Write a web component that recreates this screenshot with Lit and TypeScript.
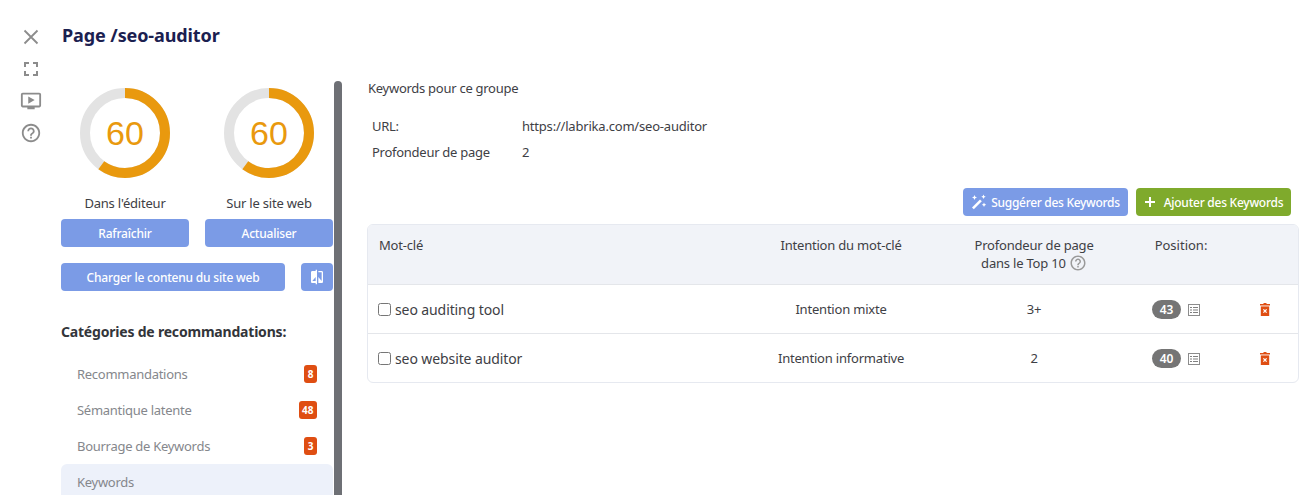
import { LitElement, html, css, svg } from "lit";
import { customElement } from "lit/decorators.js";

const gauge = (v: number) => {
  const r = 40;
  const c = 2 * Math.PI * r;
  return html`<svg class="gauge" width="90" height="90" viewBox="0 0 90 90">
    <circle cx="45" cy="45" r="${r}" fill="none" stroke="#e3e3e3" stroke-width="10"></circle>
    <circle cx="45" cy="45" r="${r}" fill="none" stroke="#e9990e" stroke-width="10"
      stroke-dasharray="${(c * v) / 100} ${c}" transform="rotate(-90 45 45)"></circle>
    <text x="45" y="57" text-anchor="middle" class="gauge-num">${v}</text>
  </svg>`;
};

const helpPath = svg`<path d="M11 18h2v-2h-2v2zm1-16C6.48 2 2 6.48 2 12s4.48 10 10 10 10-4.48 10-10S17.52 2 12 2zm0 18c-4.41 0-8-3.59-8-8s3.59-8 8-8 8 3.59 8 8-3.59 8-8 8zm0-14c-2.21 0-4 1.79-4 4h2c0-1.1.9-2 2-2s2 .9 2 2c0 2-3 1.75-3 5h2c0-2.25 3-2.5 3-5 0-2.21-1.79-4-4-4z"></path>`;

const tableIcon = html`<svg class="tbl" width="14" height="14" viewBox="0 0 14 14">
  <rect x="1.5" y="1.5" width="11" height="11" fill="none" stroke="#8c8c8c" stroke-width="1"></rect>
  <path d="M3 4.500h2M6 4.500h5M3 7h2M6 7h5M3 9.500h2M6 9.500h5" stroke="#808080" stroke-width="1.2" fill="none"></path>
</svg>`;

const trashIcon = html`<svg width="10" height="13" viewBox="0 0 10 13">
  <path d="M3.5 0h3v1H10v1.600H0V1h3.500z" fill="#df4e12"></path>
  <path d="M.8 3.400h8.400V13H.8z" fill="#df4e12"></path>
  <path d="M3.400 6.400l3.200 3.200M6.600 6.400L3.400 9.600" stroke="#fff" stroke-width="1.3" fill="none"></path>
</svg>`;

@customElement("app-root")
export class AppRoot extends LitElement {
  static styles = css`
    :host { display: block; height: 495px; overflow: hidden; background: #fff; }
    * { box-sizing: border-box; }
    .page { display: flex; height: 495px; overflow: hidden; font-family: "Noto Sans", sans-serif; color: #3e4045; font-size: 13px; letter-spacing: -0.27px; }
    .rail { width: 61px; flex: none; display: flex; flex-direction: column; align-items: center; padding-top: 27px; }
    .rail svg { display: block; fill: #8c8c8c; }
    .rail .i1 { height: 20px; }
    .rail .i2 { margin-top: 12px; height: 20px; }
    .rail .i3 { margin-top: 11px; height: 22px; }
    .rail .i4 { margin-top: 10px; height: 22px; }
    .main { flex: 1; min-width: 0; display: flex; flex-direction: column; }
    h1 { margin: 0; height: 81px; padding: 22px 0 0 1px; font-size: 18px; line-height: 26px; font-weight: 700; color: #1b2050; letter-spacing: -0.1px; }
    .cols { display: flex; flex: 1; min-height: 0; }
    .side { width: 272px; flex: none; padding-top: 7px; }
    .bar { width: 8px; flex: none; margin-left: 1px; background: #6e7075; border-radius: 4px 4px 0 0; }
    .gauges { display: grid; grid-template-columns: 128px 128px; column-gap: 16px; justify-items: center; }
    .gcol { display: flex; flex-direction: column; align-items: center; }
    .gauge { display: block; }
    .gauge-num { font-family: "Liberation Sans", sans-serif; font-size: 34px; fill: #e9990e; letter-spacing: 0; }
    .glabel { margin-top: 14px; height: 22px; line-height: 22px; letter-spacing: -0.2px; }
    .btn { display: flex; align-items: center; justify-content: center; height: 28px; border-radius: 4px; background: #7b9be6; color: #fff; font-size: 12px; font-weight: 500; letter-spacing: -0.2px; white-space: nowrap; }
    .row1 { display: grid; grid-template-columns: 128px 128px; column-gap: 16px; margin-top: 5px; }
    .row2 { display: grid; grid-template-columns: 224px 32px; column-gap: 16px; margin-top: 16px; }
    .btn svg { fill: #fff; display: block; }
    h2 { margin: 30px 0 0; height: 22px; line-height: 22px; font-size: 14px; font-weight: 700; color: #33353a; letter-spacing: -0.2px; }
    .cats { margin-top: 13px; }
    .cat { display: flex; align-items: center; justify-content: space-between; height: 36px; padding: 0 16px 0 16px; color: #85878c; border-radius: 6px 6px 0 0; letter-spacing: -0.28px; }
    .cat.on { background: #edf1fa; }
    .badge { display: flex; align-items: center; justify-content: center; height: 18px; padding: 0 3.5px; border-radius: 3px; background: #df4e12; color: #fff; font-size: 10px; font-weight: 700; letter-spacing: 0; }
    .content { flex: 1; min-width: 0; padding: 0 9px 0 25px; }
    .ctitle { height: 14px; margin: 0 0 0 1px; line-height: 14px; }
    .info { display: grid; grid-template-columns: 150px 1fr; margin: 18px 0 0 5px; }
    .info div { height: 26px; line-height: 26px; }
    .info .url { letter-spacing: -0.2px; }
    .actions { display: flex; justify-content: flex-end; gap: 8px; margin: 23px 8px 0 0; }
    .actions .btn { gap: 4px; }
    .sug { width: 165px; letter-spacing: -0.3px; }
    .add { width: 155px; background: #7faa2c; gap: 8px !important; letter-spacing: -0.25px; }
    .tbl-wrap { margin-top: 8px; border: 1px solid #e6e9f0; border-radius: 6px; overflow: hidden; }
    .tr { display: grid; grid-template-columns: 359px 228px 158px 136px 1fr; align-items: center; }
    .tr + .tr { border-top: 1px solid #e4e6ea; }
    .th { height: 59px; background: #f1f3f8; align-items: start; padding-top: 12px; line-height: 17px; text-align: center; letter-spacing: -0.2px; }
    .th > :first-child { text-align: left; padding-left: 11px; }
    .td { height: 49px; text-align: center; letter-spacing: -0.2px; }
    .cell { margin-top: -1px; }
    .kw { display: flex; align-items: center; text-align: left; padding-left: 10px; font-size: 14px; letter-spacing: -0.1px; gap: 4px; margin-top: 1px; }
    .kw input { margin: 0; width: 13px; height: 13px; }
    .pos { display: flex; align-items: center; padding-left: 39px; gap: 6px; margin-top: 1px; }
    .pill { display: flex; align-items: center; justify-content: center; width: 29px; height: 19px; border-radius: 10px; background: #757575; color: #fff; font-size: 12px; font-weight: 600; letter-spacing: 0; }
    .tbl { display: block; }
    .del { padding-left: 11px; display: flex; margin-top: 1px; }
    .q { vertical-align: -4px; fill: #9a9a9a; }
    .poshead { letter-spacing: 0; }
  `;

  render() {
    const rows = [
      ["seo auditing tool", "Intention mixte", "3+", "43"],
      ["seo website auditor", "Intention informative", "2", "40"],
    ];
    return html`<div class="page">
      <div class="rail">
        <svg class="i1" width="20" height="20" viewBox="0 0 20 20"><path d="M3.500 3.500l13 13M16.500 3.500l-13 13" stroke="#8c8c8c" stroke-width="1.8" fill="none"></path></svg>
        <svg class="i2" width="20" height="20" viewBox="0 0 20 20"><path d="M4 8V4h4M12 4h4v4M16 12v4h-4M8 16H4v-4" stroke="#8c8c8c" stroke-width="2" fill="none"></path></svg>
        <svg class="i3" width="22" height="22" viewBox="0 0 24 24"><path d="M21 3H3c-1.110 0-2 .89-2 2v12c0 1.100.89 2 2 2h5v2h8v-2h5c1.100 0 1.990-.9 1.990-2L23 5c0-1.110-.9-2-2-2zm0 14H3V5h18v12zm-5-6l-7 4V7z"></path></svg>
        <svg class="i4" width="22" height="22" viewBox="0 0 24 24">${helpPath}</svg>
      </div>
      <div class="main">
        <h1>Page /seo-auditor</h1>
        <div class="cols">
          <div class="side">
            <div class="gauges">
              <div class="gcol">${gauge(60)}<div class="glabel">Dans l'éditeur</div></div>
              <div class="gcol">${gauge(60)}<div class="glabel">Sur le site web</div></div>
            </div>
            <div class="row1"><div class="btn">Rafraîchir</div><div class="btn">Actualiser</div></div>
            <div class="row2">
              <div class="btn">Charger le contenu du site web</div>
              <div class="btn"><svg width="16" height="16" viewBox="0 0 24 24"><path d="M10 3H5c-1.100 0-2 .9-2 2v14c0 1.100.9 2 2 2h5v2h2V1h-2v2zm0 15H5l5-6v6zm9-15h-5v2h5v13l-5-6v9h5c1.100 0 2-.9 2-2V5c0-1.100-.9-2-2-2z"></path></svg></div>
            </div>
            <h2>Catégories de recommandations:</h2>
            <div class="cats">
              <div class="cat"><span>Recommandations</span><span class="badge">8</span></div>
              <div class="cat"><span>Sémantique latente</span><span class="badge">48</span></div>
              <div class="cat"><span>Bourrage de Keywords</span><span class="badge">3</span></div>
              <div class="cat on"><span>Keywords</span></div>
            </div>
          </div>
          <div class="bar"></div>
          <div class="content">
            <div class="ctitle">Keywords pour ce groupe</div>
            <div class="info">
              <div>URL:</div><div class="url">https://labrika.com/seo-auditor</div>
              <div>Profondeur de page</div><div>2</div>
            </div>
            <div class="actions">
              <div class="btn sug"><svg width="16" height="16" viewBox="0 0 16 16"><path d="M1 13.400l8-8 1.800 1.800-8 8z"></path><path d="M3.500 1l.8 1.700 1.700.8-1.700.8-.8 1.700-.8-1.700L1 3.500l1.700-.8zM12.500 .5l.7 1.500 1.500.7-1.500.7-.7 1.500-.7-1.500-1.500-.7 1.500-.7zM13 8.500l.7 1.500 1.500.7-1.500.7-.7 1.500-.7-1.500-1.500-.7 1.500-.7z"></path></svg>Suggérer des Keywords</div>
              <div class="btn add"><svg width="12" height="12" viewBox="0 0 12 12"><path d="M5 1h2v4h4v2H7v4H5V7H1V5h4z"></path></svg>Ajouter des Keywords</div>
            </div>
            <div class="tbl-wrap">
              <div class="tr th">
                <div>Mot-clé</div>
                <div>Intention du mot-clé</div>
                <div>Profondeur de page<br />dans le Top 10 <svg class="q" width="18" height="18" viewBox="0 0 24 24">${helpPath}</svg></div>
                <div class="poshead">Position:</div>
                <div></div>
              </div>
              ${rows.map(
                (r) => html`<div class="tr td">
                  <label class="kw"><input type="checkbox" />${r[0]}</label>
                  <div class="cell">${r[1]}</div>
                  <div class="cell">${r[2]}</div>
                  <div class="pos"><span class="pill">${r[3]}</span>${tableIcon}</div>
                  <div class="del">${trashIcon}</div>
                </div>`
              )}
            </div>
          </div>
        </div>
      </div>
    </div>`;
  }
}
